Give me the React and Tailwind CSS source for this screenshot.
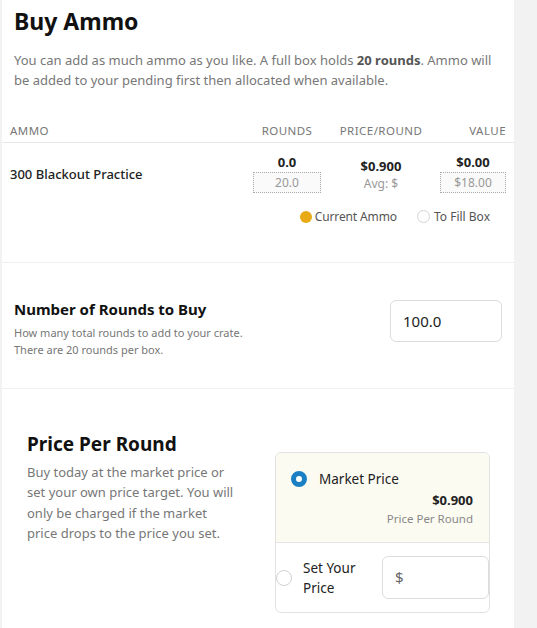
import React from 'react';

const font = "font-['Noto_Sans',sans-serif]";

const App = () => {
  return (
    <div className={`min-h-[628px] bg-[#f2f2f2] ${font} text-[#222]`}>
      <div className="ml-[2px] w-[512px] min-h-[628px] bg-white">
        {/* header */}
        <div className="px-3 pt-[4px]">
          <h1 className="text-[23px] font-bold leading-[34px] text-[#111]">Buy Ammo</h1>
          <p className="mt-[12px] text-[13px] leading-[20px] text-[#777]">
            You can add as much ammo as you like. A full box holds <b className="font-bold text-[#555]">20 rounds</b>. Ammo will be added to your pending first then allocated when available.
          </p>
        </div>

        {/* table */}
        <div className="mt-[29px]">
          <div className="flex items-center h-[24px] border-b border-[#e8e8e8] text-[11.5px] tracking-[0.04em] text-[#777] pl-[8px] pr-[8px]">
            <div className="flex-1">AMMO</div>
            <div className="w-[80px] mr-[4px] text-center">ROUNDS</div>
            <div className="w-[100px] mr-[8px] text-center">PRICE/ROUND</div>
            <div className="w-[67px] text-right">VALUE</div>
          </div>
          <div className="flex pl-[8px] pr-[8px] pt-[9px]">
            <div className="flex-1 pt-[12px] text-[13px] leading-[20px] font-medium text-[#222]">300 Blackout Practice</div>
            <div className="w-[80px] mr-[4px] flex flex-col items-center">
              <div className="text-[13px] font-bold leading-[20px]">0.0</div>
              <div className="w-[68px] h-[21px] border border-dotted border-[#aaa] bg-[#fafafa] text-center text-[12px] leading-[19px] text-[#999]">20.0</div>
            </div>
            <div className="w-[100px] mr-[8px] flex flex-col items-center pt-[4px]">
              <div className="text-[13px] font-bold leading-[20px]">$0.900</div>
              <div className="text-[12px] leading-[16px] text-[#999]">Avg: $</div>
            </div>
            <div className="w-[67px] flex flex-col items-end">
              <div className="w-[66px] text-center text-[13px] font-bold leading-[20px]">$0.00</div>
              <div className="w-[66px] h-[21px] border border-dotted border-[#aaa] bg-[#fafafa] text-center text-[12px] leading-[19px] text-[#999]">$18.00</div>
            </div>
          </div>
          <div className="flex justify-end items-center gap-[20px] pr-[24px] mt-[15px] h-[17px] text-[12px] text-[#555]">
            <div className="flex items-center gap-[3px]">
              <span className="inline-block w-[12px] h-[12px] rounded-full bg-[#e8ab17]"></span>
              <span className="tracking-[-0.01em]">Current Ammo</span>
            </div>
            <div className="flex items-center gap-[4px]">
              <span className="inline-block w-[13px] h-[13px] rounded-full border border-[#d4d4d4] bg-white"></span>
              To Fill Box
            </div>
          </div>
        </div>

        {/* rounds to buy */}
        <div className="mt-[37px] border-t border-b border-[#f0f0f0] flex items-start justify-between px-3 pt-[35px] pb-[30px]">
          <div>
            <h2 className="text-[15px] font-bold leading-[22px] text-[#111]">Number of Rounds to Buy</h2>
            <p className="mt-[4px] text-[11px] leading-[17px] text-[#777]">
              How many total rounds to add to your crate.
              <br />
              There are 20 rounds per box.
            </p>
          </div>
          <div className="mt-[2px] w-[112px] h-[42px] rounded-[6px] border border-[#dcdcdc] flex items-center px-[12px] text-[15px] text-[#222]">
            100.0
          </div>
        </div>

        {/* price per round */}
        <div className="flex justify-between pl-[25px] pr-[24px] pt-[42px]">
          <div className="w-[220px]">
            <h2 className="text-[19px] font-bold leading-[26px] text-[#111]">Price Per Round</h2>
            <p className="mt-[5px] text-[13px] leading-[20.3px] text-[#777]">
              Buy today at the market price or
              <br />
              set your own price target. You will
              <br />
              only be charged if the market
              <br />
              price drops to the price you set.
            </p>
          </div>
          <div className="mt-[21px] w-[215px] rounded-[6px] border border-[#e2e2e2] overflow-hidden">
            <div className="bg-[#fcfbf2] border-b border-[#e6e6e6] pl-[15px] pr-[16px] pt-[16px] pb-[15px]">
              <div className="flex items-center gap-[12px] h-[20px]">
                <span className="inline-block w-[16px] h-[16px] rounded-full border-[5px] border-[#1b80c3] bg-white"></span>
                <span className="text-[13.5px] text-[#222]">Market Price</span>
              </div>
              <div className="mt-[1px] text-right">
                <div className="text-[13px] font-bold leading-[20px] text-[#222]">$0.900</div>
                <div className="text-[11.5px] leading-[17px] text-[#888]">Price Per Round</div>
              </div>
            </div>
            <div className="flex items-center h-[69px]">
              <span className="inline-block w-[16px] h-[16px] rounded-full border border-[#d0d0d0] bg-white"></span>
              <span className="ml-[11px] flex-1 text-[13.5px] leading-[20px] text-[#222]">
                Set Your
                <br />
                Price
              </span>
              <div className="w-[107px] h-[43px] rounded-[6px] border border-[#dcdcdc] flex items-center px-[12px] text-[15px] text-[#666]">
                $
              </div>
            </div>
          </div>
        </div>
      </div>
    </div>
  );
};

export default App;
